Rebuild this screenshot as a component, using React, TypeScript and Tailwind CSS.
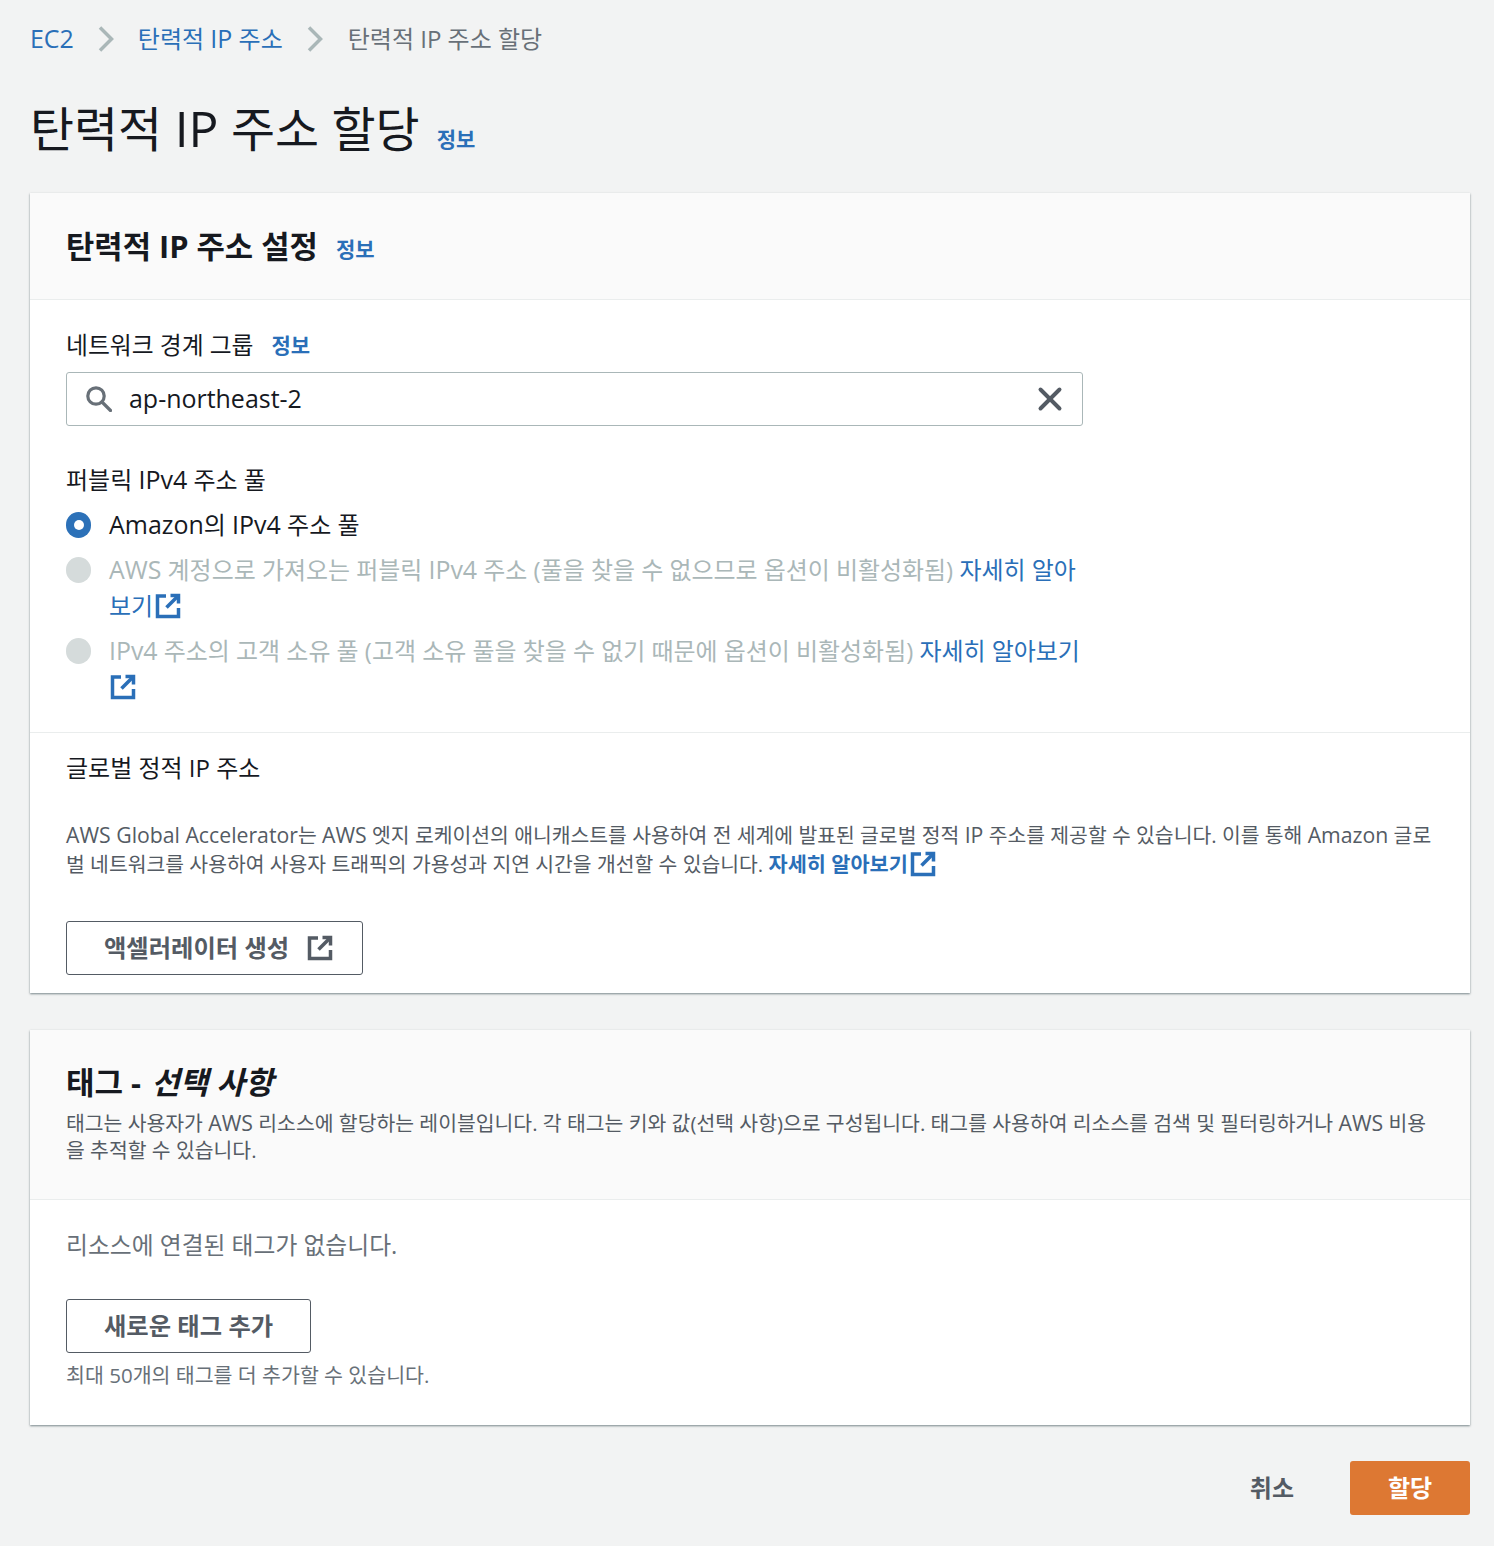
import { X } from 'lucide-react';
import type { ReactNode } from 'react';

const External = ({ className = '' }: { className?: string }) => (
  <svg viewBox="0 0 26 26" fill="none" stroke="currentColor" strokeWidth="3.5" className={`inline-block h-[26px] w-[26px] ${className}`}>
    <path d="M11 3H2.500v20.500h21V15" />
    <path d="M15.500 2.500h8v8" />
    <path d="M23 3 11.500 14.500" />
  </svg>
);

const Info = ({ className = '' }: { className?: string }) => <a className={`text-[21px] font-bold text-[#2a6fb8] ${className}`}>정보</a>;

// latin runs sit a little larger than the hangul around them
const L = ({ children }: { children: ReactNode }) => <span className="text-[1.04em] leading-none">{children}</span>;

const Radio = ({ checked = false }: { checked?: boolean }) =>
  checked ? (
    <span className="flex h-[26px] w-[25px] shrink-0 items-center justify-center rounded-full bg-[#2c71b8]">
      <span className="h-[10px] w-[10px] rounded-full bg-white" />
    </span>
  ) : (
    <span className="block h-[26px] w-[25px] shrink-0 rounded-full bg-[#d5dbdb]" />
  );

const Chevron = () => (
  <svg viewBox="0 0 16 26" className="mx-[24px] h-[26px] w-[16px] text-[#aab7b8]" fill="none" stroke="currentColor" strokeWidth="3.5">
    <path d="M2 1.500 13.500 13 2 24.500" />
  </svg>
);

const App = () => {
  return (
    <div className="h-[1546px] bg-[#f2f3f3] pl-[30px] pr-[24px] text-[24px] text-[#16191f] [font-family:'Open_Sans','Noto_Sans_CJK_KR',sans-serif]">
      <nav className="flex h-[77px] items-center text-[24px] leading-[34px]">
        <a className="text-[#2a6fb8]"><L>EC2</L></a>
        <Chevron />
        <a className="text-[#2a6fb8]">탄력적 <L>IP</L> 주소</a>
        <Chevron />
        <span className="ml-px text-[#687078]">탄력적 IP 주소 할당</span>
      </nav>

      <div className="flex h-[116px] items-baseline gap-[17px] pt-[20px]">
        <h1 className="text-[47.900px] font-normal leading-[64px]">탄력적 <L>IP</L> 주소 할당</h1>
        <Info />
      </div>

      <section className="bg-white shadow-[0_1px_2px_rgba(0,28,36,0.5)]">
        <header className="flex h-[107px] items-center gap-[18px] border-b border-[#eaeded] bg-[#fafafa] px-[36px]">
          <h2 className="text-[30.800px] font-bold leading-[40px]">탄력적 IP 주소 설정</h2>
          <Info className="pt-[8px]" />
        </header>
        <div className="px-[36px] pt-[27px]">
          <div className="flex h-[36px] items-center gap-[18px] pt-px">
            <span className="text-[23.800px]">네트워크 경계 그룹</span>
            <Info />
          </div>
          <div className="mt-[9px] flex h-[54px] w-[1017px] items-center rounded-[3px] border border-[#aab7b8] pl-[19px] pr-[13px]">
            <svg viewBox="0 0 26 26" className="h-[26px] w-[26px] text-[#687078]" fill="none" stroke="currentColor" strokeWidth="3.2">
              <circle cx="10" cy="10" r="8.200" />
              <path d="M16 16l8.500 8.500" strokeLinecap="round" />
            </svg>
            <span className="ml-[17px] flex-1"><L>ap-northeast-2</L></span>
            <X className="h-[38px] w-[38px] text-[#545b64]" strokeWidth={2.5} />
          </div>
          <div className="mt-[36px] leading-[36px]">퍼블릭 <L>IPv4</L> 주소 풀</div>
          <div className="mt-[9px] flex items-center gap-[18px] leading-[36px]">
            <Radio checked />
            <span><L>Amazon</L>의 <L>IPv4</L> 주소 풀</span>
          </div>
          <div className="mt-[9px] flex w-[1017px] items-start gap-[18px] text-[23.950px] leading-[36px]">
            <span className="mt-[5px] shrink-0"><Radio /></span>
            <span className="text-[#aab7b8]">
              <L>AWS</L> 계정으로 가져오는 퍼블릭 <L>IPv4</L> 주소 (풀을 찾을 수 없으므로 옵션이 비활성화됨) <a className="text-[#2a6fb8]">자세히 알아보기<External className="ml-[2px] align-[-4px]" /></a>
            </span>
          </div>
          <div className="mt-[9px] flex w-[1017px] items-start gap-[18px] text-[23.950px] leading-[36px]">
            <span className="mt-[5px] shrink-0"><Radio /></span>
            <span className="text-[#aab7b8]">
              <L>IPv4</L> 주소의 고객 소유 풀 (고객 소유 풀을 찾을 수 없기 때문에 옵션이 비활성화됨) <a className="text-[#2a6fb8]">자세히 알아보기 <External className="ml-px align-[-4px]" /></a>
            </span>
          </div>
        </div>
        <div className="mt-[27px] border-t border-[#eaeded] px-[36px] pb-[18px] pt-[17px]">
          <div className="leading-[36px]">글로벌 정적 IP 주소</div>
          <p className="mt-[35px] text-[20.430px] leading-[29px] text-[#545b64]">
            <L>AWS Global Accelerator</L>는 <L>AWS</L> 엣지 로케이션의 애니캐스트를 사용하여 전 세계에 발표된 글로벌 정적 <L>IP</L> 주소를 제공할 수 있습니다. 이를 통해 <L>Amazon</L> 글로벌 네트워크를 사용하여 사용자 트래픽의 가용성과 지연 시간을 개선할 수 있습니다. <a className="text-[20.800px] font-bold text-[#2a6fb8]">자세히 알아보기<External className="ml-[2px] align-[-5px]" /></a>
          </p>
          <button className="mt-[42px] flex h-[54px] items-center gap-[18px] rounded-[3px] border border-[#545b64] pl-[37px] pr-[29px] text-[24.300px] font-bold text-[#545b64]">
            액셀러레이터 생성 <External />
          </button>
        </div>
      </section>

      <section className="mt-[37px] bg-white shadow-[0_1px_2px_rgba(0,28,36,0.5)]">
        <header className="h-[170px] border-b border-[#eaeded] bg-[#fafafa] px-[36px] pt-[32px]">
          <h2 className="text-[31px] font-bold leading-[40px]">태그 - <em className="ml-[2px]">선택 사항</em></h2>
          <p className="mt-[8px] text-[20.460px] leading-[27px] text-[#545b64]">
            태그는 사용자가 <L>AWS</L> 리소스에 할당하는 레이블입니다. 각 태그는 키와 값(선택 사항)으로 구성됩니다. 태그를 사용하여 리소스를 검색 및 필터링하거나 <L>AWS</L> 비용을 추적할 수 있습니다.
          </p>
        </header>
        <div className="px-[36px] pb-[36px] pt-[27px]">
          <div className="text-[23.800px] leading-[36px] text-[#687078]">리소스에 연결된 태그가 없습니다.</div>
          <button className="mt-[36px] flex h-[54px] items-center rounded-[3px] border border-[#545b64] px-[37px] text-[24.300px] font-bold text-[#545b64]">
            새로운 태그 추가
          </button>
          <div className="mt-[8px] text-[20.550px] leading-[28px] text-[#687078]">최대 50개의 태그를 더 추가할 수 있습니다.</div>
        </div>
      </section>

      <div className="mt-[36px] flex items-center justify-end gap-[56px]">
        <button className="font-bold text-[#545b64]">취소</button>
        <button className="flex h-[54px] w-[120px] items-center justify-center rounded-[3px] bg-[#dd7833] font-bold text-white">할당</button>
      </div>
    </div>
  );
};

export default App;
